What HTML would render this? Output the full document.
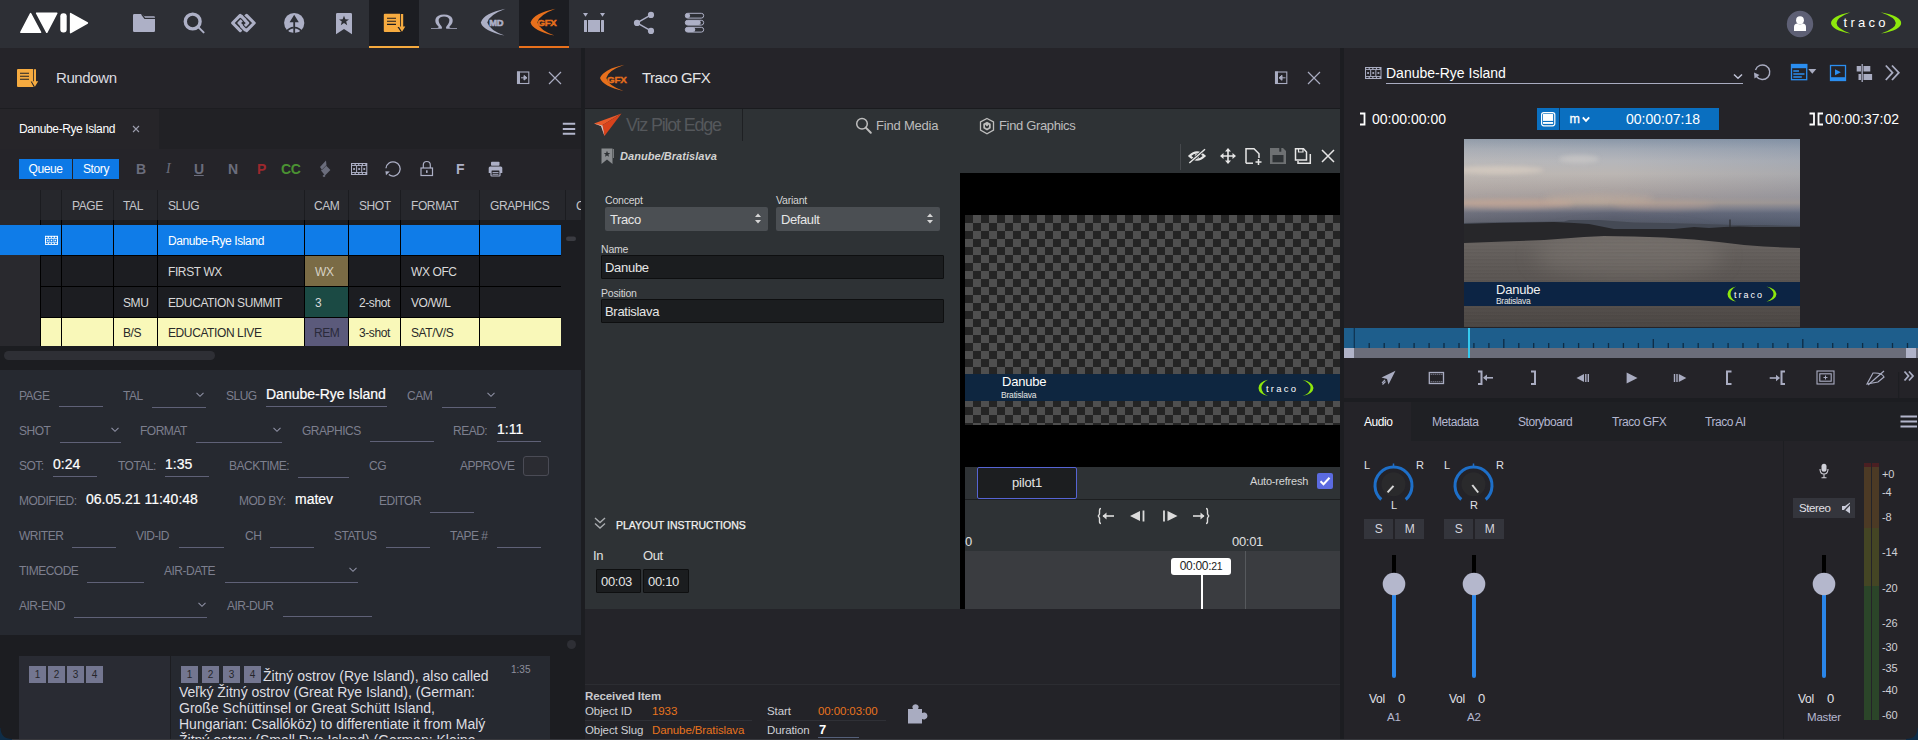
<!DOCTYPE html>
<html><head><meta charset="utf-8">
<style>
*{box-sizing:border-box;margin:0;padding:0}
html,body{width:1918px;height:740px;overflow:hidden;background:#1c1d21;font-family:"Liberation Sans",sans-serif;color:#e6e6e6;letter-spacing:-0.4px}
.a{position:absolute}
svg{position:absolute;overflow:visible}
#top{left:0;top:0;width:1918px;height:48px;background:#2d2f35}
.tab-act{top:0;height:48px;width:50px;background:#1c1d22}
.ul{position:absolute;left:0;bottom:0;width:100%;height:2px}
/* left panel */
#lp{left:0;top:48px;width:581px;height:692px;background:#1c1d21}
.lbl{position:absolute;font-size:12px;color:#81838f;white-space:nowrap}
.val{position:absolute;font-size:14px;color:#fff;white-space:nowrap}
.line{position:absolute;height:1px;background:#6a6c80}
.chev{position:absolute;width:6px;height:6px;border-right:1px solid #8d8fa3;border-bottom:1px solid #8d8fa3;transform:rotate(45deg)}
.th{position:absolute;top:190px;height:30px;font-size:12px;color:#c3c4c9;line-height:30px;background:#26272c}
.tt{font-size:12px;line-height:32px;height:30px;color:#d9d9d9;white-space:nowrap;letter-spacing:-0.4px}
.fl{font-size:12px;line-height:16px;color:#7d7f8e;white-space:nowrap;letter-spacing:-0.5px}
.fv{font-size:14px;line-height:18px;color:#fff;white-space:nowrap;letter-spacing:0;-webkit-text-stroke:0.2px #fff}
.nb{width:17px;height:17px;background:#737690;color:#25252a;font-size:10px;line-height:17px;text-align:center;letter-spacing:0}
.g13{font-size:13px;line-height:16px;white-space:nowrap}
.sel{height:24px;background:#4b4f53;border-radius:2px;color:#e6e6e6;font-size:13px;line-height:26px;padding-left:5px;letter-spacing:-0.4px}
.inp{background:#1b1d1f;border:1px solid #0e0f10;border-radius:1px;color:#e6e6e6;font-size:13px;line-height:24px;padding-left:3px;letter-spacing:-0.3px}
.ri{font-size:11.5px;line-height:14px;color:#cfd0d4;white-space:nowrap;letter-spacing:-0.1px}
.tc{font-size:14px;line-height:17px;color:#fff;letter-spacing:0}
.rt{top:415px;font-size:12px;line-height:14px;color:#b4b7d0;letter-spacing:-0.45px}
.rl{font-size:11px;line-height:13px;color:#e0e0e6;letter-spacing:0}
.smb{top:519px;height:20px;background:#34353c;color:#d6d6de;font-size:12px;line-height:20px;text-align:center}
.vl{top:692px;font-size:12px;line-height:14px;color:#e0e0e6;letter-spacing:-0.3px}
.vn{top:691px;font-size:13px;line-height:15px;color:#e0e0e6}
.ml{top:710px;font-size:11.5px;line-height:14px;color:#b4b7d0;letter-spacing:-0.2px}
.cell{position:absolute;height:30px;line-height:30px;font-size:12px;color:#d9d9d9;white-space:nowrap}
</style></head>
<body>
<!-- TOP BAR -->
<div id="top" class="a">
  <div class="a tab-act" style="left:369px"><div class="ul" style="background:#f5a93e"></div></div>
  <div class="a tab-act" style="left:519px"><div class="ul" style="background:#e8701c"></div></div>
  <svg width="1918" height="48" style="left:0;top:0">
    <!-- AVID -->
    <g fill="#fff" stroke="#fff" stroke-width="1.5" stroke-linejoin="round">
      <path d="M20.8,32.3 L30.6,13.6 L40.6,32.3 Z"/>
      <path d="M36.6,13.2 L56.8,13.2 L46.8,32.3 Z"/>
      <rect x="60.3" y="13.2" width="6.4" height="19.4" rx="3" stroke="none"/>
      <path d="M70.6,13.6 L87.4,23 L70.6,32.6 Z"/>
    </g>
    <g fill="#adb0c6">
      <!-- folder -->
      <path d="M133,15.3 Q133,14 134.3,14 L141.5,14 L144.2,16.2 L153.8,16.2 Q155,16.2 155,17.4 L155,30.8 Q155,32 153.8,32 L134.2,32 Q133,32 133,30.8 Z"/>
      <path d="M141.6,14.2 L144.8,18.3 L155.5,18.3" stroke="#2d2f35" stroke-width="1.3" fill="none"/>
      <!-- search -->
      <circle cx="192.7" cy="21.5" r="7.4" fill="none" stroke="#adb0c6" stroke-width="3.4"/>
      <path d="M198.6,27.4 L203.6,32.4" stroke="#adb0c6" stroke-width="2" stroke-linecap="round"/>
      <!-- chain -->
      <g fill="none" stroke-linejoin="round" stroke-linecap="round">
        <path d="M240.2,15.4 L232.6,23 L240.2,30.6 L247.8,23 Z" stroke="#adb0c6" stroke-width="3.1"/>
        <path d="M246.6,15.4 L254.2,23 L246.6,30.6 L239,23 Z" stroke="#adb0c6" stroke-width="3.1"/>
        <path d="M241.8,16.6 L244.8,19.6" stroke="#2d2f35" stroke-width="5.2" stroke-linecap="butt"/>
        <path d="M241,15.8 L245.5,20.3" stroke="#adb0c6" stroke-width="3.1" stroke-linecap="butt"/>
        <path d="M241.7,26.4 L244.8,29.5" stroke="#2d2f35" stroke-width="5.2" stroke-linecap="butt"/>
        <path d="M240.9,25.6 L245.6,30.3" stroke="#adb0c6" stroke-width="3.1" stroke-linecap="butt"/>
      </g>
      <!-- tree -->
      <circle cx="294.2" cy="23" r="10.1"/>
      <path d="M294.2,14.8 L289.6,22.2 L293.3,22.2 L293.3,33.3 L295.1,33.3 L295.1,22.2 L298.8,22.2 Z" fill="#2d2f35"/>
      <path d="M286.3,31.6 Q289.5,27.8 293.6,27.6 M302.1,31.6 Q298.9,27.8 294.8,27.6" stroke="#2d2f35" stroke-width="1.6" fill="none"/>
      <!-- bookmark -->
      <path d="M336,14.3 Q336,13 337.3,13 L350.7,13 Q352,13 352,14.3 L352,34.2 L344,29 L336,34.2 Z"/>
      <path d="M344,15.8 L345.4,19.2 L349,19.4 L346.2,21.6 L347.2,25.2 L344,23.1 L340.8,25.2 L341.8,21.6 L339,19.4 L342.6,19.2 Z" fill="#2d2f35"/>
      <!-- omega -->
      <path d="M431,28 L437,28 Q439,28 438.5,26.5 Q434.5,23 435.5,19 Q437,14.5 444,14.5 Q451,14.5 452.5,19 Q453.5,23 449.5,26.5 Q449,28 451,28 L457,28 L457,28.8 L446.5,28.8 Q445.3,28.6 446.5,26.2 Q449.8,22.5 449.3,19.5 Q448.3,16.5 444,16.5 Q439.7,16.5 438.7,19.5 Q438.2,22.5 441.5,26.2 Q442.7,28.6 441.5,28.8 L431,28.8 Z"/>
      <!-- MD crescent -->
      <path d="M505.5,8.8 Q484,13 480.8,22.5 Q483,31 504.5,35.6 Q489.5,30 487.3,22.5 Q489,15 505.5,8.8 Z"/>
      <text x="489.3" y="25.9" font-size="9.3" font-weight="bold" font-family="Liberation Sans" fill="#adb0c6" stroke="#adb0c6" stroke-width="0.6" letter-spacing="-0.3">MD</text>
      <!-- storyboard -->
      <path d="M583,13 L588,13 L585.5,16.8 Z M600,13 L605,13 L602.5,16.8 Z"/>
      <rect x="584" y="20" width="3" height="12" rx="0.5"/>
      <rect x="588" y="20" width="12" height="12"/>
      <rect x="601" y="20" width="3" height="12" rx="0.5"/>
      <!-- share -->
      <circle cx="651" cy="14.9" r="3.1"/><circle cx="637" cy="22.9" r="3.1"/><circle cx="651" cy="30.9" r="3.1"/>
      <path d="M637,22.9 L651,14.9 M637,22.9 L651,30.9" stroke="#adb0c6" stroke-width="1.5"/>
      <!-- settings pills -->
      <g>
        <rect x="685.3" y="13.3" width="18.4" height="4.8" rx="2.4" fill="none" stroke="#adb0c6" stroke-width="1"/>
        <rect x="685.3" y="13.3" width="4.8" height="4.8" rx="2.4"/>
        <rect x="685.3" y="20.3" width="18.4" height="4.8" rx="2.4" fill="none" stroke="#adb0c6" stroke-width="1"/>
        <rect x="685.3" y="20.3" width="15.5" height="4.8" rx="2.4"/>
        <rect x="685.3" y="27.3" width="18.4" height="4.8" rx="2.4" fill="none" stroke="#adb0c6" stroke-width="1"/>
        <rect x="685.3" y="27.3" width="10" height="4.8" rx="2.4"/>
      </g>
    </g>
    <!-- rundown orange -->
    <g fill="#f6ab40">
      <path d="M384.8,13.8 L400,13.8 L400,27 L397.5,27 L400.8,32 L384.8,32 Q383.8,32 383.8,31 L383.8,14.8 Q383.8,13.8 384.8,13.8 Z"/>
      <path d="M400.8,14 L403.2,14 L403.2,26.5 L405.3,26.5 L402,31.8 L398.7,26.5 L400.8,26.5 Z"/>
      <path d="M387,18.2 L396,18.2 M387,21.3 L396,21.3 M387,24.4 L396,24.4" stroke="#1c1d22" stroke-width="1.1"/>
    </g>
    <!-- GFX -->
    <g fill="#e8701c">
      <path d="M555.5,8.8 Q534,13 530.5,22.5 Q533,31 554.5,35.6 Q539.5,30 537.3,22.5 Q539,15 555.5,8.8 Z"/>
      <text x="537.6" y="26" font-size="9.6" font-weight="bold" font-family="Liberation Sans" stroke="#e8701c" stroke-width="0.5" letter-spacing="-0.3">GFX</text>
    </g>
    <!-- avatar -->
    <circle cx="1800" cy="24" r="13.2" fill="#5e6075"/>
    <circle cx="1800" cy="20.2" r="3.9" fill="#fff"/>
    <path d="M1794,31 L1794,27 Q1794,23.5 1797.5,23.5 Q1800,25.2 1802.5,23.5 Q1806,23.5 1806,27 L1806,31 Z" fill="#fff"/>
    <!-- traco -->
    <path d="M1850.5,12.2 Q1831.5,16 1831,23 Q1831.5,30 1850.5,33.6 Q1836.5,28.5 1836.5,23 Q1836.5,17.5 1850.5,12.2 Z" fill="#8ee80c"/>
    <path d="M1880.5,12.2 Q1901,16 1901.2,23 Q1901,30 1881,33.6 Q1895.8,28.5 1895.8,23 Q1895.8,17.5 1880.5,12.2 Z" fill="#8ee80c"/>
    <text x="1843.5" y="27" font-size="13" font-family="Liberation Sans" fill="#fff" letter-spacing="3.3">traco</text>
  </svg>
</div>

<!-- LEFT PANEL -->
<div class="a" style="left:0;top:48px;width:581px;height:60px;background:#252429"></div>
<div class="a" style="left:0;top:108px;width:581px;height:1px;background:#1d1d21"></div>
<div class="a" style="left:0;top:109px;width:581px;height:40px;background:#212125"></div>
<div class="a" style="left:0;top:109px;width:159px;height:40px;background:#262529"></div>
<div class="a" style="left:0;top:149px;width:581px;height:41px;background:#252429"></div>
<div class="a" style="left:0;top:190px;width:581px;height:175px;background:#1c1d21"></div>
<div class="a" style="left:0;top:370px;width:581px;height:265px;background:#262930"></div>
<div class="a" style="left:0;top:635px;width:581px;height:105px;background:#1c1d21"></div>

<svg width="581" height="200" style="left:0;top:0">
  <!-- rundown icon header -->
  <g fill="#f6ab40">
    <path d="M18,69 L33,69 L33,81.5 L30.7,81.5 L33.7,87 L18,87 Q17,87 17,86 L17,70 Q17,69 18,69 Z"/>
    <path d="M33.8,69.2 L36,69.2 L36,81.2 L38.2,81.2 L34.9,86.8 L31.6,81.2 L33.8,81.2 Z"/>
    <path d="M20,73.2 L29,73.2 M20,76.2 L29,76.2 M20,79.2 L29,79.2" stroke="#222328" stroke-width="1.1"/>
  </g>
  <!-- dock icon -->
  <g fill="none" stroke="#a9acc1" stroke-width="1.1">
    <rect x="517.5" y="72" width="11.3" height="11.5"/>
  </g>
  <rect x="517" y="71.5" width="3" height="12.5" fill="#a9acc1"/>
  <path d="M521,77.8 L524,77.8 L524,75.5 L527,77.8 L524,80.1 L524,77.8" fill="#a9acc1" stroke="#a9acc1" stroke-width="1"/>
  <!-- close -->
  <path d="M549,72 L561,84 M561,72 L549,84" stroke="#a9acc1" stroke-width="1.2"/>
  <!-- tab close -->
  <path d="M133,126 L139,132 M139,126 L133,132" stroke="#9c9eae" stroke-width="1.1"/>
  <!-- hamburger -->
  <path d="M562.8,123.7 L575.2,123.7 M562.8,128.9 L575.2,128.9 M562.8,133.8 L575.2,133.8" stroke="#b3b6cc" stroke-width="2"/>
</svg>
<div class="a" style="left:56px;top:69px;font-size:15px;color:#dcdce0;line-height:18px">Rundown</div>
<div class="a" style="left:19px;top:122px;font-size:12px;color:#fff;line-height:14px">Danube-Rye Island</div>

<!-- toolbar -->
<div class="a" style="left:19px;top:159px;width:53px;height:20px;background:#0d79e6;color:#fff;font-size:12px;line-height:20px;text-align:center">Queue</div>
<div class="a" style="left:73px;top:159px;width:46px;height:20px;background:#0d79e6;color:#fff;font-size:12px;line-height:20px;text-align:center">Story</div>
<div class="a" style="left:136px;top:161px;font-size:14px;font-weight:bold;color:#6b6d7c;line-height:16px">B</div>
<div class="a" style="left:166px;top:161px;font-size:14px;font-family:'Liberation Serif',serif;font-style:italic;color:#6b6d7c;line-height:16px">I</div>
<div class="a" style="left:194px;top:161px;font-size:14px;font-weight:bold;color:#6b6d7c;line-height:16px;text-decoration:underline">U</div>
<div class="a" style="left:228px;top:161px;font-size:14px;font-weight:bold;color:#6b6d7c;line-height:16px">N</div>
<div class="a" style="left:257px;top:161px;font-size:14px;font-weight:bold;color:#9c282d;line-height:16px">P</div>
<div class="a" style="left:281px;top:161px;font-size:14px;font-weight:bold;color:#4b9232;line-height:16px">CC</div>
<div class="a" style="left:456px;top:161px;font-size:14px;font-weight:bold;color:#adb0c6;line-height:16px">F</div>
<svg width="581" height="200" style="left:0;top:0">
  <!-- flash -->
  <path d="M326,160.5 L320,167 L322,170 L326.5,165.5 Z M321,170.5 L326,165.5 L330.4,170 L325,175.5 Z M322.5,176 L324,177.3 L325.5,176 L324,174.6 Z" fill="#6b6d7c"/>
  <!-- film -->
<rect x="351" y="163" width="16.3" height="12" fill="#adb0c6"/>
<rect x="352.20" y="164.00" width="2.38" height="1.1" fill="#252429"/>
<rect x="352.20" y="172.90" width="2.38" height="1.1" fill="#252429"/>
<rect x="355.77" y="164.00" width="2.38" height="1.1" fill="#252429"/>
<rect x="355.77" y="172.90" width="2.38" height="1.1" fill="#252429"/>
<rect x="359.35" y="164.00" width="2.38" height="1.1" fill="#252429"/>
<rect x="359.35" y="172.90" width="2.38" height="1.1" fill="#252429"/>
<rect x="362.93" y="164.00" width="2.38" height="1.1" fill="#252429"/>
<rect x="362.93" y="172.90" width="2.38" height="1.1" fill="#252429"/>
<rect x="352.00" y="166.00" width="4.10" height="6.00" fill="#252429"/>
<rect x="353.15" y="168.10" width="1.8" height="1.8" fill="#adb0c6"/>
<rect x="357.10" y="166.00" width="4.10" height="6.00" fill="#252429"/>
<rect x="358.25" y="168.10" width="1.8" height="1.8" fill="#adb0c6"/>
<rect x="362.20" y="166.00" width="4.10" height="6.00" fill="#252429"/>
<rect x="363.35" y="168.10" width="1.8" height="1.8" fill="#adb0c6"/>
  <!-- refresh -->
  <path d="M386,168.3 A7.1,7.1 0 1,1 388.8,174.6" fill="none" stroke="#adb0c6" stroke-width="1.3"/>
  <path d="M385.4,171.2 L389.8,171.6 L386,175.3 Z" fill="#adb0c6"/>
  <!-- lock -->
  <rect x="421" y="168" width="11.5" height="7.5" fill="none" stroke="#adb0c6" stroke-width="1.2"/>
  <path d="M423.3,168 L423.3,165 A3.5,3.5 0 0,1 430.3,165 L430.3,168" fill="none" stroke="#adb0c6" stroke-width="1.2"/>
  <rect x="426" y="170.3" width="1.6" height="2.6" fill="#adb0c6"/>
  <!-- printer -->
  <rect x="491" y="161.8" width="8.5" height="4" rx="0.8" fill="#adb0c6"/>
  <path d="M488.7,168 Q488.7,166.5 490.2,166.5 L500.8,166.5 Q502.3,166.5 502.3,168 L502.3,173 L488.7,173 Z" fill="#adb0c6"/>
  <rect x="491" y="170" width="9" height="6" rx="0.8" fill="#252429" stroke="#adb0c6" stroke-width="1.2"/>
  <path d="M492.5,172.5 L498.5,172.5 M492.5,174.3 L498.5,174.3" stroke="#adb0c6" stroke-width="0.9"/>
</svg>


<!-- TABLE -->
<div class="a" style="left:0;top:190px;width:581px;height:30px;background:#26272c"></div>
<div class="a" style="left:0;top:220px;width:40px;height:126px;background:#29292e"></div>
<!-- row backgrounds -->
<div class="a" style="left:0;top:225px;width:561px;height:30px;background:#0f7ce8"></div>
<div class="a" style="left:40px;top:318px;width:521px;height:28px;background:#f9f8b9"></div>
<div class="a" style="left:305px;top:256px;width:43px;height:30px;background:#7a6b45"></div>
<div class="a" style="left:305px;top:287px;width:43px;height:30px;background:#1b4a44"></div>
<div class="a" style="left:305px;top:318px;width:43px;height:28px;background:#5b5a7b"></div>
<svg width="581" height="200" style="left:0;top:190px">
  <g stroke="#1b1c20" stroke-width="1">
    <path d="M40.5,0 V30 M61.5,0 V30 M113.5,0 V30 M157.5,0 V30 M304.5,0 V30 M348.5,0 V30 M400.5,0 V30 M479.5,0 V30 M565.5,0 V30"/>
  </g>
  <g stroke="#000" stroke-width="1">
    <path d="M61.5,30 V156 M113.5,30 V156 M157.5,30 V156 M304.5,30 V156 M348.5,30 V156 M400.5,30 V156 M479.5,30 V156"/>
    <path d="M40.5,30 V35 M40.5,65 V156"/>
    <path d="M40,65.5 H561 M40,96.5 H561 M40,127.5 H561"/>
  </g>
  <!-- film icon -->
  <rect x="45" y="45.8" width="13" height="9.1" fill="#fff"/>
  <g stroke="#0f7ce8" stroke-width="1.1" stroke-linecap="round">
    <path d="M46.3,47.4 H47.3 M49.3,47.4 H50.3 M52.3,47.4 H53.3 M55.3,47.4 H56.3 M46.3,53.4 H47.3 M49.3,53.4 H50.3 M52.3,53.4 H53.3 M55.3,53.4 H56.3"/>
  </g>
  <g fill="none" stroke="#0f7ce8" stroke-width="1">
    <rect x="46.6" y="49.2" width="2.4" height="2.6"/>
    <rect x="50.3" y="49.2" width="2.4" height="2.6"/>
    <rect x="54" y="49.2" width="2.4" height="2.6"/>
  </g>
  <!-- scroll pill -->
  <rect x="566" y="46.5" width="10" height="4.5" rx="2.2" fill="#3a3b41"/>
</svg>
<div class="a" style="left:4px;top:351px;width:211px;height:9px;border-radius:4.5px;background:#2e2f35"></div>
<div class="a tt" style="left:72px;top:190px;color:#c3c4c9">PAGE</div>
<div class="a tt" style="left:123px;top:190px;color:#c3c4c9">TAL</div>
<div class="a tt" style="left:168px;top:190px;color:#c3c4c9">SLUG</div>
<div class="a tt" style="left:314px;top:190px;color:#c3c4c9">CAM</div>
<div class="a tt" style="left:359px;top:190px;color:#c3c4c9">SHOT</div>
<div class="a tt" style="left:411px;top:190px;color:#c3c4c9">FORMAT</div>
<div class="a tt" style="left:490px;top:190px;color:#c3c4c9">GRAPHICS</div>
<div class="a tt" style="left:576px;top:190px;color:#c3c4c9;width:5px;overflow:hidden">C</div>
<div class="a tt" style="left:168px;top:225px;color:#fff">Danube-Rye Island</div>
<div class="a tt" style="left:168px;top:256px">FIRST WX</div>
<div class="a tt" style="left:315px;top:256px;color:#d6d2c4">WX</div>
<div class="a tt" style="left:411px;top:256px">WX OFC</div>
<div class="a tt" style="left:123px;top:287px">SMU</div>
<div class="a tt" style="left:168px;top:287px">EDUCATION SUMMIT</div>
<div class="a tt" style="left:315px;top:287px">3</div>
<div class="a tt" style="left:359px;top:287px">2-shot</div>
<div class="a tt" style="left:411px;top:287px">VO/W/L</div>
<div class="a tt" style="left:123px;top:317px;color:#2a2a2a">B/S</div>
<div class="a tt" style="left:168px;top:317px;color:#2a2a2a">EDUCATION LIVE</div>
<div class="a tt" style="left:314px;top:317px;color:#2a2a3a">REM</div>
<div class="a tt" style="left:359px;top:317px;color:#2a2a2a">3-shot</div>
<div class="a tt" style="left:411px;top:317px;color:#2a2a2a">SAT/V/S</div>


<!-- FORM -->
<div class="a fl" style="left:19px;top:388px">PAGE</div>
<div class="a" style="left:59px;top:406px;width:44px;height:1px;background:#5f6177"></div>
<div class="a fl" style="left:123px;top:388px">TAL</div>
<div class="a" style="left:152px;top:407px;width:54px;height:1px;background:#5f6177"></div>
<svg width="10" height="6" style="left:196px;top:392px"><path d="M0.5,0.8 L4,4.3 L7.5,0.8" fill="none" stroke="#8e90a4" stroke-width="1.1"/></svg>
<div class="a fl" style="left:226px;top:388px">SLUG</div>
<div class="a fv" style="left:266px;top:385px">Danube-Rye Island</div>
<div class="a" style="left:266px;top:406px;width:121px;height:1px;background:#5f6177"></div>
<div class="a fl" style="left:407px;top:388px">CAM</div>
<div class="a" style="left:442px;top:407px;width:54px;height:1px;background:#5f6177"></div>
<svg width="10" height="6" style="left:487px;top:392px"><path d="M0.5,0.8 L4,4.3 L7.5,0.8" fill="none" stroke="#8e90a4" stroke-width="1.1"/></svg>
<div class="a fl" style="left:19px;top:423px">SHOT</div>
<div class="a" style="left:60px;top:442px;width:61px;height:1px;background:#5f6177"></div>
<svg width="10" height="6" style="left:111px;top:427px"><path d="M0.5,0.8 L4,4.3 L7.5,0.8" fill="none" stroke="#8e90a4" stroke-width="1.1"/></svg>
<div class="a fl" style="left:140px;top:423px">FORMAT</div>
<div class="a" style="left:196px;top:442px;width:86px;height:1px;background:#5f6177"></div>
<svg width="10" height="6" style="left:273px;top:427px"><path d="M0.5,0.8 L4,4.3 L7.5,0.8" fill="none" stroke="#8e90a4" stroke-width="1.1"/></svg>
<div class="a fl" style="left:302px;top:423px">GRAPHICS</div>
<div class="a" style="left:370px;top:441px;width:64px;height:1px;background:#5f6177"></div>
<div class="a fl" style="left:453px;top:423px">READ:</div>
<div class="a fv" style="left:497px;top:420px">1:11</div>
<div class="a" style="left:497px;top:441px;width:44px;height:1px;background:#5f6177"></div>
<div class="a fl" style="left:19px;top:458px">SOT:</div>
<div class="a fv" style="left:53px;top:455px">0:24</div>
<div class="a" style="left:53px;top:476px;width:44px;height:1px;background:#5f6177"></div>
<div class="a fl" style="left:118px;top:458px">TOTAL:</div>
<div class="a fv" style="left:165px;top:455px">1:35</div>
<div class="a" style="left:165px;top:476px;width:44px;height:1px;background:#5f6177"></div>
<div class="a fl" style="left:229px;top:458px">BACKTIME:</div>
<div class="a" style="left:298px;top:477px;width:51px;height:1px;background:#5f6177"></div>
<div class="a fl" style="left:369px;top:458px">CG</div>
<div class="a fl" style="left:460px;top:458px">APPROVE</div>
<div class="a" style="left:523px;top:456px;width:26px;height:20px;border:1px solid #4a4b55;border-radius:3px;background:#2b2c32"></div>
<div class="a fl" style="left:19px;top:493px">MODIFIED:</div>
<div class="a fv" style="left:86px;top:490px">06.05.21 11:40:48</div>
<div class="a fl" style="left:239px;top:493px">MOD BY:</div>
<div class="a fv" style="left:295px;top:490px">matev</div>
<div class="a fl" style="left:379px;top:493px">EDITOR</div>
<div class="a" style="left:430px;top:512px;width:44px;height:1px;background:#5f6177"></div>
<div class="a fl" style="left:19px;top:528px">WRITER</div>
<div class="a" style="left:72px;top:547px;width:44px;height:1px;background:#5f6177"></div>
<div class="a fl" style="left:136px;top:528px">VID-ID</div>
<div class="a" style="left:179px;top:547px;width:45px;height:1px;background:#5f6177"></div>
<div class="a fl" style="left:245px;top:528px">CH</div>
<div class="a" style="left:270px;top:547px;width:44px;height:1px;background:#5f6177"></div>
<div class="a fl" style="left:334px;top:528px">STATUS</div>
<div class="a" style="left:386px;top:547px;width:44px;height:1px;background:#5f6177"></div>
<div class="a fl" style="left:450px;top:528px">TAPE #</div>
<div class="a" style="left:497px;top:547px;width:44px;height:1px;background:#5f6177"></div>
<div class="a fl" style="left:19px;top:563px">TIMECODE</div>
<div class="a" style="left:87px;top:582px;width:57px;height:1px;background:#5f6177"></div>
<div class="a fl" style="left:164px;top:563px">AIR-DATE</div>
<div class="a" style="left:225px;top:582px;width:133px;height:1px;background:#5f6177"></div>
<svg width="10" height="6" style="left:349px;top:567px"><path d="M0.5,0.8 L4,4.3 L7.5,0.8" fill="none" stroke="#8e90a4" stroke-width="1.1"/></svg>
<div class="a fl" style="left:19px;top:598px">AIR-END</div>
<div class="a" style="left:74px;top:617px;width:133px;height:1px;background:#5f6177"></div>
<svg width="10" height="6" style="left:198px;top:602px"><path d="M0.5,0.8 L4,4.3 L7.5,0.8" fill="none" stroke="#8e90a4" stroke-width="1.1"/></svg>
<div class="a fl" style="left:227px;top:598px">AIR-DUR</div>
<div class="a" style="left:283px;top:616px;width:89px;height:1px;background:#5f6177"></div>

<!-- STORY -->
<div class="a" style="left:19px;top:656px;width:151px;height:84px;background:#292b33"></div>
<div class="a" style="left:171px;top:656px;width:379px;height:84px;background:#262930"></div>
<div class="a" style="left:566.5px;top:640px;width:9px;height:9px;border-radius:50%;background:#2e2f35"></div>
<div class="a nb" style="left:29px;top:666px">1</div>
<div class="a nb" style="left:48px;top:666px">2</div>
<div class="a nb" style="left:67px;top:666px">3</div>
<div class="a nb" style="left:86px;top:666px">4</div>
<div class="a nb" style="left:181px;top:666px">1</div>
<div class="a nb" style="left:202px;top:666px">2</div>
<div class="a nb" style="left:223px;top:666px">3</div>
<div class="a nb" style="left:244px;top:666px">4</div>
<div class="a" style="left:511px;top:664px;font-size:10px;color:#8d8f9c;letter-spacing:0;line-height:12px">1:35</div>
<div class="a" style="left:179px;top:668px;width:380px;font-size:14px;line-height:16px;color:#dedee2;letter-spacing:0;text-indent:84px;white-space:nowrap">Žitný ostrov (Rye Island), also called<br>Veľký Žitný ostrov (Great Rye Island), (German:<br>Große Schüttinsel or Great Schütt Island,<br>Hungarian: Csallóköz) to differentiate it from Malý<br>Žitný ostrov (Small Rye Island) (German: Kleine</div>

<!-- MIDDLE PANEL -->
<div class="a" style="left:585px;top:48px;width:755px;height:60px;background:#252429"></div>
<div class="a" style="left:585px;top:108px;width:755px;height:1px;background:#1a1b1e"></div>
<div class="a" style="left:585px;top:109px;width:755px;height:500px;background:#2e3235"></div>
<div class="a" style="left:585px;top:609px;width:755px;height:76px;background:#242429"></div>
<div class="a" style="left:585px;top:684px;width:755px;height:1px;background:#2c2d32"></div>
<div class="a" style="left:585px;top:685px;width:755px;height:55px;background:#232328"></div>
<svg width="760" height="700" style="left:585px;top:0">
  <!-- header GFX logo -->
  <g fill="#e8701c">
    <path d="M39.5,64.8 Q19,69 15,78 Q18,86.5 38.5,91 Q23,85.5 21.3,78 Q23,70.5 39.5,64.8 Z"/>
    <text x="22" y="82.5" font-size="9.8" font-weight="bold" font-family="Liberation Sans" letter-spacing="-0.2" stroke="#e8701c" stroke-width="0.4">GFX</text>
  </g>
  <!-- dock + close -->
  <rect x="690.5" y="72" width="11.3" height="11.5" fill="none" stroke="#a9acc1" stroke-width="1.1"/>
  <rect x="690" y="71.5" width="3" height="12.5" fill="#a9acc1"/>
  <path d="M700.5,77.8 L697,77.8 L697,75.3 L694,77.8 L697,80.3 L697,77.8" fill="#a9acc1" stroke="#a9acc1" stroke-width="1"/>
  <path d="M723,72 L735,84 M735,72 L723,84" stroke="#a9acc1" stroke-width="1.2"/>
  <!-- viz arrow -->
  <path d="M36.5,113.5 L9,123.5 L16,126 Z" fill="#e85a2a"/>
  <path d="M36.5,113.5 L16,126 L19.5,136 Z" fill="#d8431c"/>
  <path d="M9,123.5 L16,126 L19.5,136 L17.5,125.5 Z" fill="#c9cccf"/>
  <path d="M157.5,109 V141" stroke="#1e2023" stroke-width="1"/>
  <!-- find media search -->
  <circle cx="277" cy="123.7" r="5.3" fill="none" stroke="#bdbdbd" stroke-width="1.5"/>
  <path d="M280.8,127.6 L285.8,132.8" stroke="#bdbdbd" stroke-width="2" stroke-linecap="round"/>
  <!-- hexagon -->
  <path d="M402,118.5 L408.5,122 L408.5,130 L402,133.7 L395.5,130 L395.5,122 Z" fill="none" stroke="#bdbdbd" stroke-width="1.3"/>
  <path d="M398.3,123.8 L402,121.8 L405.7,123.8 L405.7,128.3 L402,130.5 L398.3,128.3 Z" fill="#bdbdbd"/>
  <path d="M400,124.5 L402,126.5 L404,124.5 L404,127.3 L402,128.5 L400,127.3 Z" fill="#2e3235"/>
  <!-- bookmark -->
  <path d="M16.5,148.5 L27.5,148.5 L27.5,164 L22,159.5 L16.5,164 Z" fill="#8a8d90"/>
  <path d="M28.5,149 V158" stroke="#8a8d90" stroke-width="0.8"/>
  <path d="M22,150.8 L22.9,153 L25.2,153.1 L23.4,154.5 L24,156.8 L22,155.5 L20,156.8 L20.6,154.5 L18.8,153.1 L21.1,153 Z" fill="#2e3235"/>
  <!-- toolbar right -->
  <path d="M595.5,144 V170" stroke="#45484c" stroke-width="1"/>
  <g fill="#e6e6e6" stroke="#e6e6e6">
    <!-- eye slash -->
    <path d="M604.5,156 Q612,148.8 619.5,156 Q612,163.2 604.5,156 Z" fill="none" stroke-width="2.2"/>
    <circle cx="612" cy="156" r="2.3" stroke="none"/>
    <path d="M604.8,162.6 L619.6,149.6" stroke="#2e3235" stroke-width="3.2"/>
    <path d="M604.3,163 L620,149.3" stroke-width="1.5"/>
    <!-- move -->
    <path d="M643,149 V163 M636,156 H650" stroke-width="1.6"/>
    <path d="M643,148 L646,151.5 L640,151.5 Z M643,164 L646,160.5 L640,160.5 Z M635,156 L638.5,153 L638.5,159 Z M651,156 L647.5,153 L647.5,159 Z" stroke="none"/>
    <!-- new doc -->
    <path d="M661,163.2 L661,148.8 L669,148.8 L674,153.8 L674,158" fill="none" stroke-width="1.5"/>
    <path d="M661,163.2 L668,163.2" fill="none" stroke-width="1.5"/>
    <path d="M673.5,159 V165 M670.5,162 H676.5" stroke-width="1.5"/>
    <!-- save-as -->
    <path d="M710.5,148.8 L718.5,148.8 L721.5,152 L721.5,160 L710.5,160 Z" fill="none" stroke-width="1.5"/>
    <path d="M713.5,149 L713.5,152 L718,152 L718,149" fill="none" stroke-width="1.2"/>
    <path d="M713,161 L713,163.3 L725.3,163.3 L725.3,154" fill="none" stroke-width="1.5"/>
    <!-- close -->
    <path d="M737,150 L749,162 M749,150 L737,162" stroke-width="1.5"/>
  </g>
  <!-- disabled save -->
  <g fill="#6e7173">
    <path d="M685,148 L698,148 L701,151 L701,164 L685,164 Z"/>
    <rect x="687.5" y="155" width="11" height="7.3" fill="#2e3235"/>
    <rect x="694.3" y="148" width="2" height="3.7" fill="#2e3235"/>
  </g>
</svg>
<div class="a" style="left:642px;top:69px;font-size:15px;line-height:18px;color:#e4e4e6;letter-spacing:-0.5px">Traco GFX</div>
<div class="a" style="left:626px;top:114px;font-size:18px;line-height:22px;color:#55585c;letter-spacing:-1.2px">Viz Pilot Edge</div>
<div class="a g13" style="left:876px;top:118px;color:#bdbdbd;letter-spacing:-0.2px">Find Media</div>
<div class="a g13" style="left:999px;top:118px;color:#bdbdbd;letter-spacing:-0.35px">Find Graphics</div>
<div class="a" style="left:620px;top:149px;font-size:11px;line-height:14px;color:#d2d2d2;font-weight:bold;font-style:italic;letter-spacing:0.05px">Danube/Bratislava</div>
<div class="a" style="left:605px;top:194px;font-size:10.5px;line-height:12px;color:#d5d5d5;letter-spacing:-0.2px">Concept</div>
<div class="a" style="left:776px;top:194px;font-size:10.5px;line-height:12px;color:#d5d5d5;letter-spacing:-0.2px">Variant</div>
<div class="a sel" style="left:605px;top:207px;width:163px">Traco</div>
<div class="a sel" style="left:776px;top:207px;width:164px">Default</div>
<svg width="10" height="14" style="left:754px;top:212px"><path d="M1,5 L4,1.5 L7,5 Z M1,8 L4,11.5 L7,8 Z" fill="#d5d5d5"/></svg>
<svg width="10" height="14" style="left:926px;top:212px"><path d="M1,5 L4,1.5 L7,5 Z M1,8 L4,11.5 L7,8 Z" fill="#d5d5d5"/></svg>
<div class="a" style="left:601px;top:243px;font-size:10.5px;line-height:12px;color:#d5d5d5;letter-spacing:-0.2px">Name</div>
<div class="a inp" style="left:601px;top:255px;width:343px;height:24px">Danube</div>
<div class="a" style="left:601px;top:287px;font-size:10.5px;line-height:12px;color:#d5d5d5;letter-spacing:-0.2px">Position</div>
<div class="a inp" style="left:601px;top:299px;width:343px;height:24px">Bratislava</div>

<!-- preview -->
<div class="a" style="left:960px;top:173px;width:380px;height:294px;background:#000"></div>
<div class="a" style="left:965px;top:215px;width:375px;height:210px;background-color:#242424;background-image:linear-gradient(45deg,#4f4f4f 25%,transparent 25%,transparent 75%,#4f4f4f 75%),linear-gradient(45deg,#4f4f4f 25%,transparent 25%,transparent 75%,#4f4f4f 75%);background-size:16px 16px;background-position:0 0,8px 8px"></div>
<div class="a" style="left:965px;top:374px;width:375px;height:27px;background:#0e2640"></div>
<div class="a" style="left:1002px;top:374px;font-size:13px;line-height:16px;color:#fff;letter-spacing:-0.2px">Danube</div>
<div class="a" style="left:1001px;top:390px;font-size:8.5px;line-height:10px;color:#e6e6e6;letter-spacing:-0.2px">Bratislava</div>
<svg width="60" height="20" style="left:1257px;top:378px">
  <path d="M11,1.8 Q1.5,4 1.5,10 Q1.5,16 11,18 Q4.5,15 4.5,10 Q4.5,5 11,1.8 Z" fill="#8ee80c"/>
  <path d="M45.5,1.8 Q56,4 56.5,10 Q56,16 45.5,18 Q53.5,15 53.5,10 Q53.5,5 45.5,1.8 Z" fill="#8ee80c"/>
  <text x="9" y="13.6" font-size="9.5" font-family="Liberation Sans" fill="#fff" letter-spacing="2.2">traco</text>
</svg>

<!-- pilot bar -->
<div class="a" style="left:965px;top:467px;width:375px;height:32px;background:#2e3235"></div>
<div class="a" style="left:965px;top:499px;width:375px;height:1px;background:#1c1e20"></div>
<div class="a" style="left:977px;top:467px;width:100px;height:32px;border:1.5px solid #5664d4;border-radius:2px;background:#1c1e20;color:#e4e4e4;font-size:13px;line-height:29px;text-align:center;letter-spacing:-0.2px">pilot1</div>
<div class="a" style="left:1250px;top:474px;font-size:11px;line-height:14px;color:#d5d5d5;letter-spacing:-0.2px">Auto-refresh</div>
<div class="a" style="left:1317px;top:473px;width:16px;height:16px;border-radius:2px;background:#5b6be0"></div>
<svg width="16" height="16" style="left:1317px;top:473px"><path d="M3.5,8.3 L6.5,11.3 L12.5,4.8" fill="none" stroke="#fff" stroke-width="2"/></svg>
<div class="a" style="left:960px;top:467px;width:5px;height:142px;background:#000"></div>
<svg width="130" height="20" style="left:1095px;top:506px">
  <g fill="#dcdcdc" stroke="#dcdcdc">
    <path d="M6,2.5 Q4.5,2.5 4.5,4.5 L4.5,8 L3.3,10 L4.5,12 L4.5,15.5 Q4.5,17.5 6,17.5" fill="none" stroke-width="1.4"/>
    <path d="M8,10 H19" stroke-width="1.6"/>
    <path d="M7.5,10 L11.5,6.5 L11.5,13.5 Z" stroke="none"/>
    <path d="M35,10 L45,5 L45,15 Z" stroke="none"/>
    <path d="M48.5,4.5 V15.5" stroke-width="1.8"/>
    <path d="M69,4.5 V15.5" stroke-width="1.8"/>
    <path d="M72.5,5 L82.5,10 L72.5,15 Z" stroke="none"/>
    <path d="M98,10 H109" stroke-width="1.6"/>
    <path d="M109.5,10 L105.5,6.5 L105.5,13.5 Z" stroke="none"/>
    <path d="M111,2.5 Q112.5,2.5 112.5,4.5 L112.5,8 L113.7,10 L112.5,12 L112.5,15.5 Q112.5,17.5 111,17.5" fill="none" stroke-width="1.4"/>
  </g>
</svg>
<div class="a" style="left:965px;top:534px;font-size:13px;line-height:16px;color:#e0e0e0;letter-spacing:-0.3px">0</div>
<div class="a" style="left:1232px;top:534px;font-size:13px;line-height:16px;color:#e0e0e0;letter-spacing:-0.3px">00:01</div>
<div class="a" style="left:965px;top:551px;width:375px;height:58px;background:#3a3c40"></div>
<div class="a" style="left:1245px;top:551px;width:1px;height:58px;background:#56595d"></div>
<div class="a" style="left:1201px;top:573px;width:1.5px;height:36px;background:#fff"></div>
<div class="a" style="left:1171px;top:558px;width:60px;height:17px;background:#fff;border-radius:3px;color:#222;font-size:12px;line-height:17px;text-align:center;letter-spacing:-0.3px">00:00:<span style="font-size:10.5px">21</span></div>

<!-- playout -->
<svg width="16" height="16" style="left:593px;top:516px"><path d="M2,2 L7,6.5 L12,2 M2,7.5 L7,12 L12,7.5" fill="none" stroke="#a9acaf" stroke-width="1.4"/></svg>
<div class="a" style="left:616px;top:519px;font-size:10.5px;line-height:13px;color:#f2f2f2;letter-spacing:0px;-webkit-text-stroke:0.25px #f2f2f2">PLAYOUT INSTRUCTIONS</div>
<div class="a g13" style="left:593px;top:548px;color:#e0e0e0">In</div>
<div class="a g13" style="left:643px;top:548px;color:#e0e0e0">Out</div>
<div class="a inp" style="left:596px;top:569px;width:45px;height:24px;padding-left:4px">00:03</div>
<div class="a inp" style="left:643px;top:569px;width:46px;height:24px;padding-left:4px">00:10</div>

<!-- received item -->
<div class="a ri" style="left:585px;top:689px;font-weight:bold;color:#c9c9cd">Received Item</div>
<div class="a ri" style="left:585px;top:704px">Object ID</div>
<div class="a ri" style="left:652px;top:704px;color:#e8731e">1933</div>
<div class="a ri" style="left:585px;top:723px">Object Slug</div>
<div class="a ri" style="left:652px;top:723px;color:#e8731e">Danube/Bratislava</div>
<div class="a ri" style="left:767px;top:704px">Start</div>
<div class="a ri" style="left:818px;top:704px;color:#e8731e">00:00:03:00</div>
<div class="a ri" style="left:767px;top:723px">Duration</div>
<div class="a" style="left:819px;top:722px;font-size:13px;line-height:16px;font-weight:bold;color:#fff">7</div>
<div class="a" style="left:585px;top:720px;width:167px;height:1px;background:#2f3036"></div>
<div class="a" style="left:767px;top:720px;width:119px;height:1px;background:#2f3036"></div>
<div class="a" style="left:818px;top:737px;width:41px;height:1px;background:#55607a"></div>
<svg width="24" height="22" style="left:906px;top:703px">
  <path d="M2,6 L7,6 Q6,4.5 6.5,3 Q7.5,1.2 9.5,1.2 Q11.5,1.2 12.5,3 Q13,4.5 12,6 L16,6 L16,10 Q17.5,9.2 19,9.6 Q21.5,10.5 21.5,13 Q21.5,15.5 19,16.3 Q17.5,16.8 16,16 L16,20.5 L2,20.5 Z" fill="#a9acc1"/>
</svg>

<!-- RIGHT PANEL -->
<div class="a" style="left:1344px;top:48px;width:574px;height:350px;background:#242328"></div>
<div class="a" style="left:1344px;top:398px;width:574px;height:4px;background:#1c1d21"></div>
<div class="a" style="left:1344px;top:402px;width:574px;height:39px;background:#1f2024"></div>
<div class="a" style="left:1344px;top:402px;width:67px;height:39px;background:#242328"></div>
<div class="a" style="left:1344px;top:441px;width:574px;height:299px;background:#242328"></div>
<div class="a" style="left:1783px;top:441px;width:1px;height:299px;background:#1d1e22"></div>
<svg width="574" height="700" style="left:1344px;top:0">
  <!-- film icon -->
<rect x="21" y="67" width="16.5" height="12" fill="#a9acc1"/>
<rect x="22.20" y="68.00" width="2.42" height="1.1" fill="#242328"/>
<rect x="22.20" y="76.90" width="2.42" height="1.1" fill="#242328"/>
<rect x="25.82" y="68.00" width="2.42" height="1.1" fill="#242328"/>
<rect x="25.82" y="76.90" width="2.42" height="1.1" fill="#242328"/>
<rect x="29.45" y="68.00" width="2.42" height="1.1" fill="#242328"/>
<rect x="29.45" y="76.90" width="2.42" height="1.1" fill="#242328"/>
<rect x="33.08" y="68.00" width="2.42" height="1.1" fill="#242328"/>
<rect x="33.08" y="76.90" width="2.42" height="1.1" fill="#242328"/>
<rect x="22.00" y="70.00" width="4.17" height="6.00" fill="#242328"/>
<rect x="23.18" y="72.10" width="1.8" height="1.8" fill="#a9acc1"/>
<rect x="27.17" y="70.00" width="4.17" height="6.00" fill="#242328"/>
<rect x="28.35" y="72.10" width="1.8" height="1.8" fill="#a9acc1"/>
<rect x="32.33" y="70.00" width="4.17" height="6.00" fill="#242328"/>
<rect x="33.52" y="72.10" width="1.8" height="1.8" fill="#a9acc1"/>
  <path d="M42,83.5 H399" stroke="#a9acc1" stroke-width="1.2"/>
  <path d="M390,74.5 L394,78.3 L398,74.5" fill="none" stroke="#c0c3d6" stroke-width="1.5"/>
  <!-- refresh -->
  <path d="M412.5,76.5 A7.3,7.3 0 1,0 411.5,70" fill="none" stroke="#a9acc1" stroke-width="1.4"/>
  <path d="M410,72.5 L415.5,75 L410.5,78.5 Z" fill="#a9acc1"/>
  <!-- list blue -->
  <rect x="447.5" y="64.5" width="15.2" height="15.2" fill="none" stroke="#2b8ef0" stroke-width="1.3"/>
  <rect x="447" y="64" width="16.2" height="4.2" fill="#2b8ef0"/>
  <path d="M449.3,71 H455 M449.3,74 H460.5 M449.3,77 H457.8" stroke="#2b8ef0" stroke-width="1.4"/>
  <path d="M464.3,69 L472.3,69 L468.3,73.8 Z" fill="#a9acc1"/>
  <!-- play screen -->
  <rect x="486.5" y="65.5" width="15" height="15" fill="none" stroke="#2b8ef0" stroke-width="1.3"/>
  <rect x="486" y="77.2" width="16" height="3.8" fill="#2b8ef0"/>
  <path d="M491,69.3 L496.8,72.3 L491,75.3 Z" fill="#2b8ef0"/>
  <!-- layout -->
  <path d="M518.2,64 V82" stroke="#a9acc1" stroke-width="1.3"/>
  <rect x="512.7" y="66" width="4.3" height="5.5" fill="#a9acc1"/>
  <rect x="514.5" y="74" width="2.5" height="6" fill="#a9acc1"/>
  <rect x="519.5" y="66" width="6.8" height="5.5" fill="#a9acc1"/>
  <rect x="519.5" y="74" width="8.6" height="6" fill="#a9acc1"/>
  <!-- double chevron -->
  <path d="M541.8,65.5 L548.5,72.7 L541.8,80 M548,65.5 L554.8,72.7 L548,80" fill="none" stroke="#a9acc1" stroke-width="1.8"/>
  <!-- ] -->
  <path d="M16,113.5 H20.5 V124.5 H16" fill="none" stroke="#fff" stroke-width="1.8"/>
  <path d="M469,108.5 H486 M469,108.5" stroke="#fff" stroke-width="0"/>
  <!-- ][ -->
  <path d="M465.5,113.5 H470 V124.5 H465.5 M479,113.5 H474.5 V124.5 H479" fill="none" stroke="#fff" stroke-width="1.8"/>
</svg>
<div class="a" style="left:1386px;top:65px;font-size:14px;line-height:17px;color:#fff;letter-spacing:0">Danube-Rye Island</div>
<div class="a tc" style="left:1372px;top:111px">00:00:00:00</div>
<div class="a" style="left:1537px;top:108px;width:182px;height:22px;background:#0a6fc0"></div>
<div class="a" style="left:1559px;top:108px;width:1px;height:22px;background:#0b3d6a"></div>
<svg width="24" height="22" style="left:1537px;top:108px">
  <rect x="4.6" y="4.6" width="13.2" height="13.2" rx="2.2" fill="none" stroke="#fff" stroke-width="1.2"/>
  <rect x="6" y="5.9" width="10.1" height="7" fill="#fff"/>
  <rect x="6" y="14" width="10.1" height="1.9" fill="#fff"/>
</svg>
<div class="a" style="left:1569.5px;top:112px;font-size:12.5px;line-height:15px;color:#fff;letter-spacing:0;-webkit-text-stroke:0.3px #fff">m</div>
<svg width="12" height="10" style="left:1581px;top:114px"><path d="M1.8,3.3 L5,6.8 L8.2,3.3" fill="none" stroke="#fff" stroke-width="1.9"/></svg>
<div class="a tc" style="left:1626px;top:111px">00:00:07:18</div>
<div class="a tc" style="left:1825px;top:111px">00:00:37:02</div>

<!-- video -->
<div class="a" style="left:1464px;top:139px;width:336px;height:188px;overflow:hidden;background:linear-gradient(180deg,#8a97a8 0%,#a3aab5 5.3%,#b5b6ba 11.7%,#bbb6b3 18.6%,#aea7a5 25.5%,#a39c9c 30.9%,#a89c94 34%,#7f7e88 37.2%,#626676 39.4%,#555a69 43.6%,#4a4f5c 46.8%,#4a4f5c 100%)">
  <div class="a" style="left:0;top:0;width:336px;height:90px;background:linear-gradient(90deg,rgba(210,195,180,0.12) 0%,rgba(0,0,0,0) 45%,rgba(100,120,150,0.2) 100%)"></div>
  <div class="a" style="left:-10px;top:27px;width:90px;height:8px;border-radius:50%;background:rgba(230,215,200,0.5);filter:blur(2px)"></div>
  <div class="a" style="left:95px;top:16px;width:40px;height:8px;border-radius:50%;background:rgba(220,215,210,0.4);filter:blur(2px)"></div>
  <div class="a" style="left:-10px;top:60px;width:120px;height:9px;border-radius:50%;background:rgba(200,165,150,0.55);filter:blur(2.5px)"></div>
  <div class="a" style="left:80px;top:55px;width:110px;height:10px;border-radius:50%;background:rgba(205,180,160,0.45);filter:blur(3px)"></div>
  <div class="a" style="left:150px;top:62px;width:100px;height:8px;border-radius:50%;background:rgba(195,165,150,0.4);filter:blur(3px)"></div>
  <div class="a" style="left:0;top:95px;width:336px;height:93px;background:linear-gradient(180deg,#696461 0%,#67625f 12%,#605b58 30%,#595451 55%,#524d4a 80%,#4b4643 100%)"></div>
  <div class="a" style="left:70px;top:94px;width:190px;height:45px;border-radius:50%;background:rgba(150,142,135,0.28);filter:blur(10px)"></div>
  <div class="a" style="left:0;top:96px;width:336px;height:92px;opacity:0.12;background:repeating-linear-gradient(180deg,rgba(0,0,0,0.25) 0px,rgba(0,0,0,0) 1.5px,rgba(255,255,255,0.12) 2.5px,rgba(0,0,0,0) 3.5px)"></div>
  <svg width="336" height="188" style="left:0;top:0">
    <path d="M0,84 L20,83.5 L60,83 L100,82.5 L105,81 L135,81 L170,83.5 L200,84 L240,85 L270,86 L300,86 L336,87 L336,93 L0,93 Z" fill="#454a55"/>
    <path d="M0,85 L30,84 L60,83.5 L90,83 L110,84 L125,85 L135,87 L150,90 L170,90 L210,90 L230,88 L245,89 L260,88 L275,87.5 L290,88 L336,88 L336,109 L320,108.5 L300,107.5 L280,106 L255,103 L230,100.5 L200,98.5 L170,97.5 L140,97 L120,98 L100,99.5 L80,101 L40,102.5 L0,104 Z" fill="#27272a"/>
    <path d="M266,88 V80.5" stroke="#2e2f33" stroke-width="1.3"/>
  </svg>
  <div class="a" style="left:0;top:143px;width:336px;height:24px;background:#0c2444"></div>
  <div class="a" style="left:32px;top:143px;font-size:13px;line-height:16px;color:#f0f0f0;letter-spacing:-0.2px">Danube</div>
  <div class="a" style="left:32px;top:157px;font-size:8.5px;line-height:10px;color:#e6e6e6;letter-spacing:-0.3px">Bratislava</div>
  <svg width="60" height="20" style="left:262px;top:146px">
    <path d="M10,1.5 Q1.5,3.5 1.5,9 Q1.5,14.5 10,16.8 Q4.5,13.5 4.5,9 Q4.5,4.5 10,1.5 Z" fill="#8ee80c"/>
    <path d="M40.5,1.5 Q50,3.5 50.5,9 Q50,14.5 40.5,16.8 Q47.5,13.5 47.5,9 Q47.5,4.5 40.5,1.5 Z" fill="#8ee80c"/>
    <text x="8" y="12.5" font-size="9" font-family="Liberation Sans" fill="#fff" letter-spacing="2">traco</text>
  </svg>
</div>

<!-- timeline -->
<div class="a" style="left:1344px;top:328px;width:574px;height:20px;background:#1e5e8c"></div>
<div class="a" style="left:1344px;top:348px;width:574px;height:10px;background:#6b6d7a"></div>
<div class="a" style="left:1344px;top:348px;width:10px;height:10px;background:#b0b3c8"></div>
<div class="a" style="left:1906px;top:348px;width:10px;height:10px;background:#b0b3c8"></div>
<svg width="574" height="30" style="left:1344px;top:328px">
  <path d="M10.3,0 V20" stroke="#0f3350" stroke-width="1.2"/>
  <path d="M25.2,15 V20 M40.2,15 V20 M55.2,15 V20 M70.1,15 V20 M85.1,15 V20 M100.0,15 V20 M115.0,15 V20 M129.9,15 V20 M144.9,15 V20 M159.8,11 V20 M174.8,15 V20 M189.7,15 V20 M204.7,15 V20 M219.6,15 V20 M234.6,15 V20 M249.5,15 V20 M264.5,15 V20 M279.4,15 V20 M294.4,15 V20 M309.3,11 V20 M324.3,15 V20 M339.2,15 V20 M354.2,15 V20 M369.1,15 V20 M384.1,15 V20 M399.0,15 V20 M414.0,15 V20 M428.9,15 V20 M443.9,15 V20 M458.8,11 V20 M473.8,15 V20 M488.7,15 V20 M503.7,15 V20 M518.6,15 V20 M533.6,15 V20 M548.5,15 V20 M563.5,15 V20 " stroke="#0f2c44" stroke-width="1.3"/>
  <path d="M125,0 V30" stroke="#35c8ee" stroke-width="2"/>
</svg>
<!-- transport -->
<svg width="574" height="30" style="left:1344px;top:360px">
  <g fill="#a9acc1" stroke="#a9acc1">
    <path d="M51.5,10.8 L37.5,17.5 L43,19 L44.5,24.5 Z" stroke="none"/>
    <path d="M38,22.8 L41,19.8 M38.5,24.5 L41.5,21.5" stroke-width="1.2"/>
    <rect x="85.3" y="12.5" width="14.2" height="11" fill="none" stroke-width="1.3"/>
    <path d="M85.3,14.3 H99.5 M85.3,21.7 H99.5" stroke-width="0.9" stroke-dasharray="1,1"/>
    <path d="M134,11.5 H137.5 V24 H134" fill="none" stroke-width="2"/>
    <path d="M140,17.8 H149" stroke-width="1.6"/>
    <path d="M139,17.8 L143,14.5 L143,21 Z" stroke="none"/>
    <path d="M187,11.5 H191 V24 H187" fill="none" stroke-width="2"/>
    <path d="M232.5,18 L240,14 L240,22 Z" stroke="none"/>
    <path d="M241.8,14 V22 M244.3,14 V22" stroke-width="1.4"/>
    <path d="M282.6,12.5 L293.5,18 L282.6,23.5 Z" stroke="none"/>
    <path d="M330.5,14 V22 M333,14 V22" stroke-width="1.4"/>
    <path d="M334.8,14 L342.3,18 L334.8,22 Z" stroke="none"/>
    <path d="M387.5,11.5 H383 V24 H387.5" fill="none" stroke-width="2"/>
    <path d="M425.7,18 H434.5" stroke-width="1.6"/>
    <path d="M436,18 L432,14.7 L432,21.3 Z" stroke="none"/>
    <path d="M441,11.5 H437.5 V24 H441" fill="none" stroke-width="2"/>
    <rect x="473" y="11" width="17" height="13" fill="none" stroke-width="1.1"/>
    <rect x="475.8" y="13.8" width="11.4" height="7.4" fill="none" stroke-width="1.1"/>
    <path d="M481.5,15.5 V19.5 M479.5,17.5 H483.5" stroke-width="1"/>
    <path d="M523,24 L529,13 L531,13 Q538,13 540,17 L534,22 Z" fill="none" stroke-width="1.2"/>
    <path d="M524,25 L540,11" stroke-width="1.2"/>
    <path d="M554.7,12 V38" stroke="#1d1e22" stroke-width="1" fill="none"/>
    <path d="M560.5,11.5 L564.5,16 L560.5,20.5 M565,11.5 L569,16 L565,20.5" fill="none" stroke-width="1.8"/>
  </g>
</svg>

<!-- tabs -->
<div class="a rt" style="left:1364px;color:#fff">Audio</div>
<div class="a rt" style="left:1432px">Metadata</div>
<div class="a rt" style="left:1518px">Storyboard</div>
<div class="a rt" style="left:1612px">Traco GFX</div>
<div class="a rt" style="left:1705px">Traco AI</div>
<svg width="20" height="16" style="left:1900px;top:414px"><path d="M0.5,2.5 H17 M0.5,7.5 H17 M0.5,12.5 H17" stroke="#b3b6cc" stroke-width="2"/></svg>

<!-- mixer -->
<svg width="574" height="300" style="left:1344px;top:440px">
  <g>
    <circle cx="49.5" cy="44.2" r="12" fill="#2a2a2c"/>
    <path d="M37.3,59.5 A18.5,18.5 0 1,1 61.7,59.5" fill="none" stroke="#1e6fc8" stroke-width="3"/>
    <path d="M49.5,23.5 V27" stroke="#1e6fc8" stroke-width="1.5"/>
    <path d="M49.5,45.8 L43.6,52.3" stroke="#d8d8d8" stroke-width="2"/>
    <circle cx="129.5" cy="44.2" r="12" fill="#2a2a2c"/>
    <path d="M117.3,59.5 A18.5,18.5 0 1,1 141.7,59.5" fill="none" stroke="#1e6fc8" stroke-width="3"/>
    <path d="M129.5,23.5 V27" stroke="#1e6fc8" stroke-width="1.5"/>
    <path d="M128.3,45 L134.2,52.5" stroke="#d8d8d8" stroke-width="2"/>
  </g>
  <!-- sliders -->
  <rect x="48" y="115" width="4" height="30" fill="#000"/>
  <rect x="48" y="144" width="4" height="94" rx="2" fill="#2a85e8"/>
  <circle cx="50" cy="144" r="11.3" fill="#b4b7cc"/>
  <rect x="128" y="115" width="4" height="30" fill="#000"/>
  <rect x="128" y="144" width="4" height="94" rx="2" fill="#2a85e8"/>
  <circle cx="130" cy="144" r="11.3" fill="#b4b7cc"/>
  <rect x="478" y="115" width="4" height="30" fill="#000"/>
  <rect x="478" y="144" width="4" height="94" rx="2" fill="#2a85e8"/>
  <circle cx="480" cy="144" r="11.3" fill="#b4b7cc"/>
  <!-- mic -->
  <rect x="477.5" y="23.7" width="5" height="8" rx="2.5" fill="#d0d0d8"/>
  <path d="M476,29 Q476,34 480,34 Q484,34 484,29 M480,34 V37.5 M477.5,37.8 H482.5" fill="none" stroke="#d0d0d8" stroke-width="1.1"/>
  <!-- meter -->
  <rect x="520" y="23" width="7" height="4" fill="#4a1f22"/>
  <rect x="528" y="23" width="7" height="4" fill="#4a1f22"/>
  <rect x="520" y="27" width="7" height="61" fill="#4c3a25"/>
  <rect x="528" y="27" width="7" height="61" fill="#4c3a25"/>
  <rect x="520" y="88" width="7" height="58" fill="#444524"/>
  <rect x="528" y="88" width="7" height="58" fill="#444524"/>
  <rect x="520" y="146" width="7" height="134" fill="#2b4529"/>
  <rect x="528" y="146" width="7" height="134" fill="#2b4529"/>
</svg>
<div class="a rl" style="left:1364px;top:459px">L</div>
<div class="a rl" style="left:1416px;top:459px">R</div>
<div class="a rl" style="left:1391px;top:499px">L</div>
<div class="a rl" style="left:1444px;top:459px">L</div>
<div class="a rl" style="left:1496px;top:459px">R</div>
<div class="a rl" style="left:1470px;top:499px">R</div>
<div class="a smb" style="left:1364px;width:29px">S</div>
<div class="a smb" style="left:1395px;width:29px">M</div>
<div class="a smb" style="left:1444px;width:29px">S</div>
<div class="a smb" style="left:1475px;width:29px">M</div>
<div class="a" style="left:1793px;top:498px;width:62px;height:20px;background:#34353c"></div>
<div class="a" style="left:1799px;top:501px;font-size:11.5px;line-height:14px;color:#e0e0e6">Stereo</div>
<svg width="14" height="14" style="left:1840px;top:501px"><path d="M2,5 H5 L10,1.5 V12.5 L5,9 H2 Z" fill="#c8cad8"/><path d="M11.5,2 L2,12" stroke="#34353c" stroke-width="1.3"/></svg>
<div class="a vl" style="left:1369px">Vol</div><div class="a vn" style="left:1398px">0</div>
<div class="a vl" style="left:1449px">Vol</div><div class="a vn" style="left:1478px">0</div>
<div class="a vl" style="left:1798px">Vol</div><div class="a vn" style="left:1827px">0</div>
<div class="a ml" style="left:1387px">A1</div>
<div class="a ml" style="left:1467px">A2</div>
<div class="a ml" style="left:1807px">Master</div>
<div class="a" style="left:1882px;top:466.5px;font-size:11px;line-height:14px;color:#d0d0d6;letter-spacing:-0.2px">+0</div>
<div class="a" style="left:1882px;top:484.5px;font-size:11px;line-height:14px;color:#d0d0d6;letter-spacing:-0.2px">-4</div>
<div class="a" style="left:1882px;top:509.6px;font-size:11px;line-height:14px;color:#d0d0d6;letter-spacing:-0.2px">-8</div>
<div class="a" style="left:1882px;top:545.4px;font-size:11px;line-height:14px;color:#d0d0d6;letter-spacing:-0.2px">-14</div>
<div class="a" style="left:1882px;top:580.6px;font-size:11px;line-height:14px;color:#d0d0d6;letter-spacing:-0.2px">-20</div>
<div class="a" style="left:1882px;top:615.5px;font-size:11px;line-height:14px;color:#d0d0d6;letter-spacing:-0.2px">-26</div>
<div class="a" style="left:1882px;top:640.0px;font-size:11px;line-height:14px;color:#d0d0d6;letter-spacing:-0.2px">-30</div>
<div class="a" style="left:1882px;top:661.0px;font-size:11px;line-height:14px;color:#d0d0d6;letter-spacing:-0.2px">-35</div>
<div class="a" style="left:1882px;top:683.0px;font-size:11px;line-height:14px;color:#d0d0d6;letter-spacing:-0.2px">-40</div>
<div class="a" style="left:1882px;top:708.0px;font-size:11px;line-height:14px;color:#d0d0d6;letter-spacing:-0.2px">-60</div>


<!-- window bottom edge -->
<div class="a" style="left:0;top:739px;width:1918px;height:1px;background:#37383d"></div>
<svg width="12" height="12" style="left:0;top:728px"><path d="M0,0 L0,12 L12,12 L12,11 Q1,11 0.5,0 Z" fill="#0f2d47"/></svg>
<svg width="12" height="12" style="left:1906px;top:728px"><path d="M12,0 L12,12 L0,12 L0,11 Q11,11 11.5,0 Z" fill="#0f2d47"/></svg>
</body></html>
